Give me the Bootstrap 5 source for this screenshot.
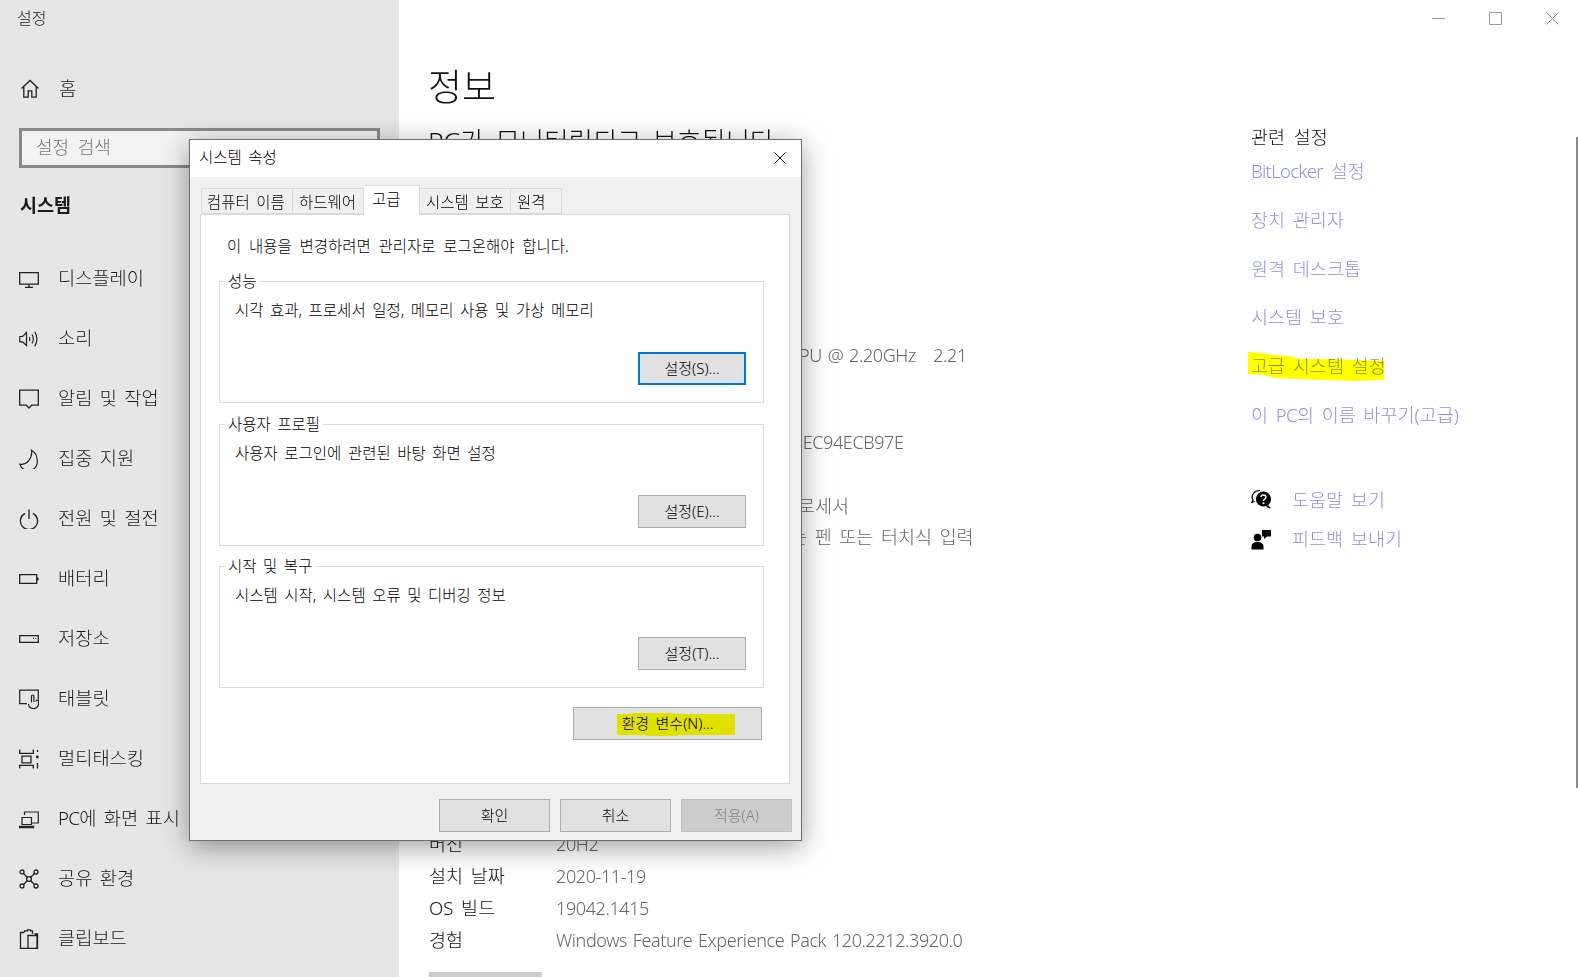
<!DOCTYPE html>
<html lang="ko">
<head>
<meta charset="utf-8">
<title>설정</title>
<link href="https://cdn.jsdelivr.net/npm/bootstrap@5.3.0/dist/css/bootstrap.min.css" rel="stylesheet">
<style>
html,body{height:977px;overflow:hidden}
body{font-family:"Noto Sans","Noto Sans CJK KR",sans-serif;background:#fff;color:#111;font-weight:300}
.app{height:977px;position:relative}
.side{width:399px;background:#e6e6e6;height:977px;flex:none;overflow:hidden;color:#1a1a1a}
.apptitle{height:36px;padding-left:17px;font-size:16px;line-height:36px}
.srow{height:60px;padding-left:19px;font-size:18.7px;gap:19px;white-space:nowrap;word-spacing:2.5px;padding-top:1px}
.srow svg{flex:none}
.firstrow{margin-top:22px;padding-left:20px;gap:19px;font-size:19px;padding-top:2px}
.searchbox{margin:10px 19px 0;width:361px;height:40px;border:3px solid #8a8a8a;background:#f2f2f2;color:#777;font-size:18px;line-height:33px;padding-left:14px;word-spacing:4px}
.groupname{margin:17px 0 23px 20px;height:40px;line-height:40px;font-size:18.5px;font-weight:700}
.mainpane{flex:1;position:relative;min-width:0}
.winbar{height:36px;padding-right:19px;gap:44px}
.leftcol{width:852px;padding-left:30px;flex:none;white-space:nowrap}
.pagetitle{margin:24px 0 0 -1px;height:54px;line-height:54px;font-size:37px;font-weight:300}
.subtitle{margin:11px 0 3px -1px;height:32px;line-height:32px;font-size:26.5px;font-weight:300;word-spacing:4px}
.h-spec{height:147px;padding-top:90px;font-size:22px}
.inforow{height:32px;line-height:32px;font-size:18.5px;word-spacing:3px}
.inforow.tall{height:55px}
.inforow.tall .val{line-height:24px;padding-top:4px;text-indent:19px}
.inforow.short{height:31px}
.lab{width:127px;flex:none}
.val{color:#666;font-size:18px;letter-spacing:-.4px;word-spacing:1.5px}
.val.ko{font-size:18.5px;letter-spacing:0;word-spacing:2.7px}
.val.ko.mixed{word-spacing:1.8px}
.h-gap{height:243px;padding-top:120px;font-size:22px}
.greybtn{margin-top:16px;width:113px;height:40px;background:#ccc}
.rightcol{padding-top:86px;width:320px}
.relhead{font-size:18.5px;height:30px;line-height:30px;margin-bottom:7px;word-spacing:4px}
.rellist{gap:24.8px}
.rel{height:24px;line-height:24px;font-size:18.5px;color:#9090de;text-decoration:none;white-space:nowrap;position:relative;word-spacing:3px}
.latin-tight{letter-spacing:-.7px}
.marker{position:absolute;mix-blend-mode:multiply;pointer-events:none}
.m-link{left:-3px;top:-2px}
.helplist{margin-top:53px}
.helprow{height:39.5px;gap:20px;font-size:18.5px}
.sbar{position:absolute;right:0;top:137px;width:2px;height:651px;background:#8a8a8a}
.dlg{position:absolute;left:189px;top:139px;width:613px;height:702px;background:#f0f0f0;border:1px solid #6f6f6f;box-shadow:0 6px 26px rgba(0,0,0,.38);font-size:15.5px;word-spacing:2.5px;font-family:"Noto Sans","Noto Sans CJK KR",sans-serif;color:#000;font-weight:300}
.dlgtitle{height:37px;background:#fff;padding:0 15px 2px 9px;font-size:15.5px}
.tabstrip{margin:11px 0 0 11px;height:26px;align-items:flex-end}
.wtab{height:26px;border:1px solid #d9d9d9;border-left-width:0;background:#f0f0f0;padding:1px 0 0 6px;font-size:15.5px;line-height:24px;white-space:nowrap}
.wtab:first-child{border-left-width:1px;padding-left:5px}
.t1{width:92px}.t2{width:71px}.t3{width:56px}.t4{width:91px}.t5{width:51px}
.wtab.on{height:30px;margin-bottom:-1px;background:#fff;border-bottom:0;padding:0 0 0 8px;line-height:26px;position:relative;z-index:2}
.tabpanel{margin:0 0 0 10px;width:590px;height:570px;background:#fff;border:1px solid #d9d9d9;padding:0 18px;position:relative}
.note{height:66px;padding:19px 0 0 8px;line-height:24px;word-spacing:3.7px}
.gbox{height:122px;border:1px solid #d9d9d9;margin-bottom:21px;position:relative;width:545px;padding:16px 15px 0}
.gbox.tight{margin-bottom:20px}
.gbox h6{position:absolute;left:5px;top:-10px;margin:0;background:#fff;padding:0 3px;font-size:15.5px;line-height:18px;font-weight:300}
.gbox p{margin:0;line-height:24px}
.gbtn{width:108px;height:33px;background:#e1e1e1;border:1px solid #adadad;border-radius:0;padding:0;font-size:15px;color:#000;font-weight:300;line-height:29px;word-spacing:2.5px}
.gbtn.prim{border:2px solid #0078d7}
.gbox .gbtn{position:absolute;right:17px;top:70px}
.envwrap{margin-top:-2px;width:545px}
.envbtn{width:189px;position:relative;display:block;margin-left:354px}
.foot{padding:15px 9px 0 0;gap:10px;width:611px}
.foot .gbtn{width:111px}
.gbtn.dis{background:#ccc;border-color:#bfbfbf;color:#838383;opacity:1}
</style>
</head>
<body>
<div class="app d-flex">
  <aside class="side">
    <div class="apptitle">설정</div>
    <div class="srow firstrow d-flex align-items-center">
      <svg width="20" height="20" viewBox="0 0 20 20" fill="none" stroke="#222" stroke-width="1.3"><path d="M1.5 9.5 10 1.5l8.5 8M3.8 8v10.2h4.4v-6.4h3.6v6.4h4.4V8"/></svg><span>홈</span>
    </div>
    <div class="searchbox">설정 검색</div>
    <div class="groupname">시스템</div>
    <div class="srow d-flex align-items-center"><svg width="20" height="20" viewBox="0 0 20 20" fill="none" stroke="#222" stroke-width="1.3"><path d="M.7 3.7h18.6v11.4H.7zM10 15.5v3M6 18.3h8"/></svg><span>디스플레이</span></div>
    <div class="srow d-flex align-items-center"><svg width="20" height="20" viewBox="0 0 20 20" fill="none" stroke="#222" stroke-width="1.2"><path d="M.8 7.5h2.8L7.5 3.5v13L3.6 12.8H.8zM10.2 8q1.2 2 0 4M13 5.5q2.6 4.5 0 9M15.8 2.8q4.2 7.2 0 14.4"/></svg><span>소리</span></div>
    <div class="srow d-flex align-items-center"><svg width="20" height="20" viewBox="0 0 20 20" fill="none" stroke="#222" stroke-width="1.3"><path d="M.7 1.2h18.6v15h-6.6L10 19l-2.7-2.8H.7z"/></svg><span>알림 및 작업</span></div>
    <div class="srow d-flex align-items-center"><svg width="20" height="20" viewBox="0 0 20 20" fill="none" stroke="#222" stroke-width="1.2"><path d="M12.5 1.2c3.2 2 5.5 5 5.5 9a8.8 8.8 0 0 1-17.2 5c6.5 1.3 13-5.5 11.7-14z"/></svg><span>집중 지원</span></div>
    <div class="srow d-flex align-items-center"><svg width="20" height="20" viewBox="0 0 20 20" fill="none" stroke="#222" stroke-width="1.3"><path d="M6 4.4a8.6 8.6 0 1 0 8 0M10 .5v9.5"/></svg><span>전원 및 절전</span></div>
    <div class="srow d-flex align-items-center"><svg width="20" height="20" viewBox="0 0 20 20" fill="none" stroke="#222" stroke-width="1.3"><path d="M.7 5.7h17v8.6H.7z"/><path d="M18 8.5h1.6v3H18z" fill="#222" stroke="none"/></svg><span>배터리</span></div>
    <div class="srow d-flex align-items-center"><svg width="20" height="20" viewBox="0 0 20 20" fill="none" stroke="#222" stroke-width="1.3"><path d="M.7 6.7h18.6v6.6H.7zM14 9.3h.9M16.3 9.3h.9"/></svg><span>저장소</span></div>
    <div class="srow d-flex align-items-center"><svg width="20" height="20" viewBox="0 0 20 20" fill="none" stroke="#222" stroke-width="1.2"><path d="M8 14.7H.7V1.2h18.6v9.5M12.5 13.5V7.2a1.2 1.2 0 0 1 2.4 0v4"/><path d="M9.5 15a5 4.6 0 1 0 10 0v-2.5a1.3 1.3 0 0 0-2.6 0M14.9 11.2v1.8"/></svg><span>태블릿</span></div>
    <div class="srow d-flex align-items-center"><svg width="20" height="20" viewBox="0 0 20 20" fill="none" stroke="#222" stroke-width="1.3"><path d="M.7.5v3.8h13.6V.5M3 7.2h9v6.6H3zM.7 19.5v-3.2h13.6v3.2M18.5 1v2M18.5 14v5.5"/><circle cx="18.3" cy="8" r="1.4" fill="#222" stroke="none"/></svg><span>멀티태스킹</span></div>
    <div class="srow d-flex align-items-center"><svg width="20" height="20" viewBox="0 0 20 20" fill="none" stroke="#222" stroke-width="1.2"><path d="M5.5 6V3h13.8v11H13"/><path d="M3 8.5h9.5v7H3zM.6 17.4h14v1.2H.6z"/></svg><span><span class="latin-tight">PC</span>에 화면 표시</span></div>
    <div class="srow d-flex align-items-center"><svg width="20" height="20" viewBox="0 0 20 20" fill="none" stroke="#222" stroke-width="1.3"><circle cx="3" cy="3" r="2"/><circle cx="17" cy="3" r="2"/><circle cx="3" cy="17" r="2"/><circle cx="17" cy="17" r="2"/><circle cx="10" cy="10" r="2.4"/><path d="M4.5 4.5 8.3 8.3M15.5 4.5 11.7 8.3M4.5 15.5l3.8-3.8M15.5 15.5l-3.8-3.8"/></svg><span>공유 환경</span></div>
    <div class="srow d-flex align-items-center"><svg width="20" height="20" viewBox="0 0 20 20" fill="none" stroke="#222" stroke-width="1.3"><path d="M5 3.5H1.5v15.8h17V5h-3M5.5 3.5V1.8h3V.8h3v1h2v3M9 6.5h9v13H9z"/></svg><span>클립보드</span></div>
  </aside>

  <main class="mainpane">
    <div class="winbar d-flex justify-content-end align-items-center">
      <svg width="13" height="13" viewBox="0 0 13 13" fill="none" stroke="#999"><path d="M0 6.5h13"/></svg>
      <svg width="13" height="13" viewBox="0 0 13 13" fill="none" stroke="#999"><path d="M.5.5h12v12H.5z"/></svg>
      <svg width="13" height="13" viewBox="0 0 13 13" fill="none" stroke="#999"><path d="M.5.5l12 12M12.5.5l-12 12"/></svg>
    </div>
    <div class="d-flex">
      <section class="leftcol">
        <h1 class="pagetitle">정보</h1>
        <h2 class="subtitle">PC가 모니터링되고 보호됩니다</h2>
        <div class="h-spec">장치 사양</div>
        <div class="inforow d-flex"><div class="lab">디바이스 이름</div><div class="val">DESKTOP</div></div>
        <div class="inforow tall d-flex"><div class="lab">프로세서</div><div class="val">Intel(R) Core(TM) i7-8750H CPU @ 2.20GHz&nbsp;&nbsp; 2.21<br>GHz</div></div>
        <div class="inforow d-flex"><div class="lab">설치된 RAM</div><div class="val">16.0GB</div></div>
        <div class="inforow d-flex"><div class="lab">장치 ID</div><div class="val">8F2A61C0-4D3B-4E17-A5D2-C2EC94ECB97E</div></div>
        <div class="inforow d-flex"><div class="lab">제품 ID</div><div class="val">00330-80000</div></div>
        <div class="inforow short d-flex"><div class="lab">시스템 종류</div><div class="val ko mixed">64비트 운영 체제, x64 기반 프로세서</div></div>
        <div class="inforow d-flex"><div class="lab">펜 및 터치</div><div class="val ko">이 디스플레이에 사용할 수 있는 펜 또는 터치식 입력</div></div>
        <div class="h-gap">Windows 사양</div>
        <div class="inforow d-flex"><div class="lab">에디션</div><div class="val">Windows 10 Pro</div></div>
        <div class="inforow d-flex"><div class="lab">버전</div><div class="val">20H2</div></div>
        <div class="inforow d-flex"><div class="lab">설치 날짜</div><div class="val">2020-11-19</div></div>
        <div class="inforow d-flex"><div class="lab">OS 빌드</div><div class="val">19042.1415</div></div>
        <div class="inforow d-flex"><div class="lab">경험</div><div class="val">Windows Feature Experience Pack 120.2212.3920.0</div></div>
        <div class="greybtn"></div>
      </section>
      <section class="rightcol">
        <div class="relhead">관련 설정</div>
        <div class="rellist d-flex flex-column">
          <a class="rel" href="#"><span class="latin-tight">BitLocker</span> 설정</a>
          <a class="rel" href="#">장치 관리자</a>
          <a class="rel" href="#">원격 데스크톱</a>
          <a class="rel" href="#">시스템 보호</a>
          <a class="rel" href="#">고급 시스템 설정<svg class="marker m-link" width="140" height="30" viewBox="0 0 140 30"><path d="M0 0l12 1 14 2 14 1 12 3h30l22 1 32 1v19l-30 1-32-1-26-1-20-1-14-3-14-1-16-2z" fill="#ff0"/></svg></a>
          <a class="rel" href="#">이 <span class="latin-tight">PC</span>의 이름 바꾸기(고급)</a>
        </div>
        <div class="helplist">
          <div class="helprow d-flex align-items-center"><svg width="21" height="21" viewBox="0 0 21 21"><path d="M9 1.5a7.5 6.5 0 0 0-7 9.5L.7 13.5l3-1" fill="none" stroke="#000" stroke-width="1.2"/><circle cx="12.5" cy="10" r="7.6" fill="#000"/><path d="M17 16l3 3.5-5-1.5z" fill="#000"/><path d="M10 8a2.5 2.2 0 1 1 3.8 2c-1 .7-1.3 1-1.3 2" fill="none" stroke="#fff" stroke-width="1.5"/><circle cx="12.5" cy="14.3" r="1" fill="#fff"/></svg><a class="rel" href="#">도움말 보기</a></div>
          <div class="helprow d-flex align-items-center"><svg width="21" height="21" viewBox="0 0 21 21" fill="#000"><circle cx="6.5" cy="8.5" r="3.8"/><path d="M.5 20.5v-3c0-3 2.5-4.5 6-4.5s6 1.5 6 4.5v3z"/><path d="M11 1h9v6.5h-4l-3 2.5V7.5h-2z"/></svg><a class="rel" href="#">피드백 보내기</a></div>
        </div>
      </section>
    </div>
    <div class="sbar"></div>
  </main>

  <div class="dlg" role="dialog">
    <div class="dlgtitle d-flex justify-content-between align-items-center">
      <span>시스템 속성</span>
      <svg width="12" height="12" viewBox="0 0 12 12" fill="none" stroke="#111"><path d="M.5.5l11 11M11.5.5l-11 11"/></svg>
    </div>
    <div class="tabstrip d-flex">
      <div class="wtab t1">컴퓨터 이름</div>
      <div class="wtab t2">하드웨어</div>
      <div class="wtab on t3">고급</div>
      <div class="wtab t4">시스템 보호</div>
      <div class="wtab t5">원격</div>
    </div>
    <div class="tabpanel">
      <div class="note">이 내용을 변경하려면 관리자로 로그온해야 합니다.</div>
      <div class="gbox"><h6>성능</h6><p>시각 효과, 프로세서 일정, 메모리 사용 및 가상 메모리</p><button class="gbtn prim">설정(S)...</button></div>
      <div class="gbox tight"><h6>사용자 프로필</h6><p>사용자 로그인에 관련된 바탕 화면 설정</p><button class="gbtn">설정(E)...</button></div>
      <div class="gbox"><h6>시작 및 복구</h6><p>시스템 시작, 시스템 오류 및 디버깅 정보</p><button class="gbtn">설정(T)...</button></div>
      <div class="envwrap"><button class="gbtn envbtn">환경 변수(N)...<svg class="marker" style="left:43px;top:5px" width="118" height="23" viewBox="0 0 118 23"><path d="M0 1h14l2-1h40l2 1h60v21H62l-2 1H30l-2-1H2l-2-1z" fill="#ff0"/></svg></button></div>
    </div>
    <div class="foot d-flex justify-content-end">
      <button class="gbtn">확인</button>
      <button class="gbtn">취소</button>
      <button class="gbtn dis">적용(A)</button>
    </div>
  </div>
</div>
<script src="https://cdn.jsdelivr.net/npm/bootstrap@5.3.0/dist/js/bootstrap.bundle.min.js"></script>
</body>
</html>
